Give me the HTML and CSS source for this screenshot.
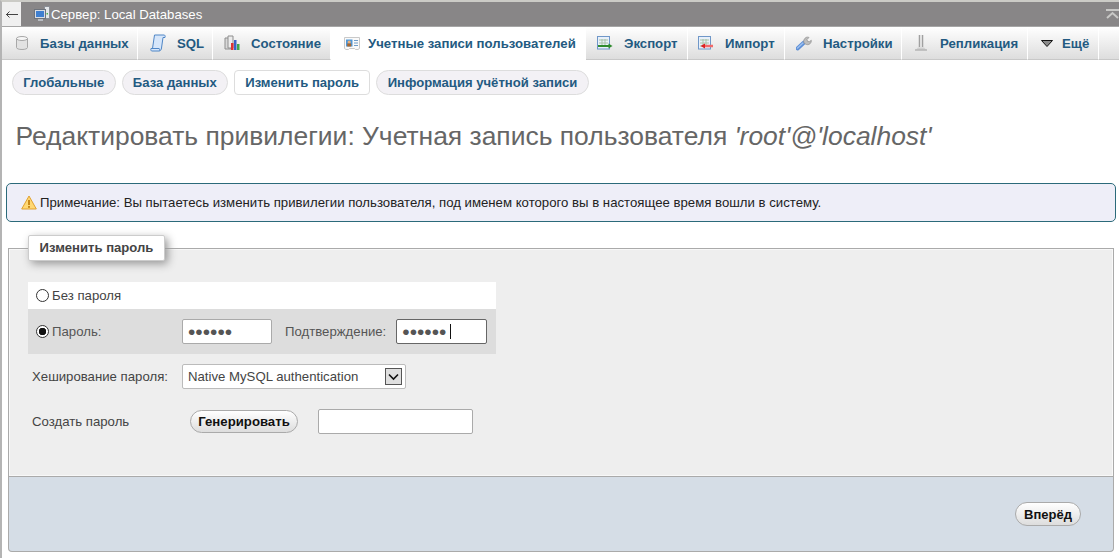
FILE: index.html
```html
<!DOCTYPE html>
<html lang="ru">
<head>
<meta charset="utf-8">
<title>Редактировать привилегии</title>
<link rel="stylesheet" href="styles.css">
</head>
<body>
<header class="serverbar">
  <a class="back" href="#" aria-label="Назад"><svg width="12" height="7" viewBox="0 0 12 7"><path d="M0 3.500h12M3.500.5L.5 3.500l3 3" fill="none" stroke="#444" stroke-width="1"/></svg></a>
  <svg class="server-icon" width="16" height="16" viewBox="0 0 16 16"><rect x="10.500" y="0.500" width="5" height="12" fill="#e4e7ea" stroke="#8b8f96"/><rect x="12.500" y="7" width="1.500" height="1.500" fill="#4caf50"/><rect x="0.500" y="3.500" width="11" height="9" fill="#d9dde3" stroke="#6d737c"/><rect x="2" y="5" width="8" height="6" fill="#3f7fd0"/><rect x="4" y="13" width="5" height="2" fill="#b8bcc2"/></svg>
  <span class="server-name">Сервер: Local Databases</span>
  <svg class="collapse" width="13" height="10" viewBox="0 0 13 10"><path d="M0 1h13M1 9l5.500-5 5.500 5" fill="none" stroke="#c8c8c6" stroke-width="2"/></svg>
</header>

<nav class="tabs">
  <a class="tab tab-db" href="#"><svg class="ico" width="16" height="16" viewBox="0 0 16 16"><path d="M2.500 3.500v9c0 1.200 2.400 2 5.500 2s5.500-.8 5.500-2v-9z" fill="#e2e2e2" stroke="#a8a8a8"/><ellipse cx="8" cy="3.500" rx="5.500" ry="2" fill="#f6f6f6" stroke="#a8a8a8"/></svg>Базы данных</a>
  <a class="tab tab-sql" href="#"><svg class="ico" width="16" height="18" viewBox="0 0 16 18"><path d="M4.500 1H14c1 0 1.500 1 1 2.500h-2L11.500 14c-.2 1.800-1 3-2.500 3H2c-1 0-1.500-1-1-2.500h1.500z" fill="#d6e6fa" stroke="#4f86c6"/><path d="M1 14.500h8c.5 0 .8.800.5 2" fill="none" stroke="#4f86c6"/></svg>SQL</a>
  <a class="tab tab-status" href="#"><svg class="ico" width="17" height="16" viewBox="0 0 17 16"><path d="M1 3h6v11H1z" fill="#d8d8d8" stroke="#8e8e8e"/><path d="M4 1h5v12H4z" fill="#ececec" stroke="#8e8e8e"/><rect x="7" y="8" width="2.500" height="7" fill="#d33"/><rect x="10" y="5" width="2.500" height="10" fill="#3a62c8"/><rect x="13" y="9" width="2.500" height="6" fill="#3fa64a"/></svg>Состояние</a>
  <a class="tab tab-users active" href="#"><svg class="ico" width="16" height="13" viewBox="0 0 16 13"><path d="M.5.500h15v11l-1.500 1h-2.500l-1-1h-5l-1 1H2l-1.500-1z" fill="#fafafa" stroke="#c9c9c9"/><rect x="2" y="2.500" width="6.500" height="7" fill="#4f97d8"/><circle cx="5.200" cy="5" r="1.600" fill="#e9b07c"/><rect x="3.200" y="6.500" width="4" height="3" fill="#a9672f"/><path d="M10 3.500h4M10 6h4M10 8.500h4" stroke="#6f9cc8"/></svg>Учетные записи пользователей</a>
  <a class="tab tab-export" href="#"><svg class="ico" width="16" height="14" viewBox="0 0 16 14"><rect x=".5" y=".5" width="12" height="12.500" fill="#e8f0fa" stroke="#6f97c8"/><path d="M2 4h9M2 7h9M2 10h9M5 3v8M8 3v8" stroke="#a8c3a8"/><path d="M1 10h11" stroke="#2e8b2e" stroke-width="2"/><path d="M11.500 7.500l4 2.500-4 2.500z" fill="#2e8b2e"/></svg>Экспорт</a>
  <a class="tab tab-import" href="#"><svg class="ico" width="16" height="14" viewBox="0 0 16 14"><rect x=".5" y=".5" width="12" height="12.500" fill="#e8f0fa" stroke="#6f97c8"/><path d="M2 4h9M2 7h9M2 10h9M5 3v8M8 3v8" stroke="#a8c3a8"/><path d="M5 10h10" stroke="#f26a6a" stroke-width="2.500"/><path d="M7 7.500L2.500 10 7 12.500z" fill="#d22"/></svg>Импорт</a>
  <a class="tab tab-settings" href="#"><svg class="ico" width="16" height="16" viewBox="0 0 16 16"><path d="M1.500 13.500L8 7.500" stroke="#5e8fd6" stroke-width="4" stroke-linecap="round"/><path d="M1.500 13L7 8" stroke="#9dc0ef" stroke-width="1.500" stroke-linecap="round"/><path d="M8 8c-.8-2 0-4.500 2-5.500 1-.5 2-.5 3 0l-2 2 .5 1.800 1.800.5 2-1.500c.2 2-.8 3.500-2.500 4.200-1.500.5-3 0-4.800-1.500z" fill="#bdbdbd" stroke="#8c8c8c" stroke-width=".7"/></svg>Настройки</a>
  <a class="tab tab-repl" href="#"><svg class="ico" width="12" height="16" viewBox="0 0 12 16"><path d="M4.500 0v12M7.500 0v12" stroke="#a0a0a0" stroke-width="1.500"/><path d="M6 1v11" stroke="#e4e4e4"/><path d="M3 12.500h6l2 2H1z" fill="#cfcfcf"/><path d="M0 15h12" stroke="#9c9c9c"/></svg>Репликация</a>
  <a class="tab tab-more" href="#"><svg class="ico" width="12" height="7" viewBox="0 0 12 7"><path d="M.5.500h11L6 6.500z" fill="#8a8a8a" stroke="#111"/></svg>Ещё</a>
  <span class="tab-rest"></span>
</nav>

<nav class="subtabs">
  <a class="pill" href="#">Глобальные</a>
  <a class="pill" href="#">База данных</a>
  <a class="pill current" href="#">Изменить пароль</a>
  <a class="pill" href="#">Информация учётной записи</a>
</nav>

<h2 class="title">Редактировать привилегии: Учетная запись пользователя <em>'root'@'localhost'</em></h2>

<div class="notice">
  <svg class="warn" width="16" height="15" viewBox="0 0 16 15"><path d="M8 1L15.300 14H.7z" fill="#ffd874" stroke="#e0a030" stroke-linejoin="round"/><path d="M8 5v5" stroke="#c98a1a" stroke-width="2"/><rect x="7" y="11" width="2" height="1.800" fill="#c98a1a"/></svg>
  <span>Примечание: Вы пытаетесь изменить привилегии пользователя, под именем которого вы в настоящее время вошли в систему.</span>
</div>

<form class="pwform">
  <fieldset class="fields">
    <legend class="legend">Изменить пароль</legend>
    <div class="pwtable">
      <label class="row row-none"><input class="radio" type="radio" name="pw"><span>Без пароля</span></label>
      <div class="row row-pass">
        <label class="pass-label"><input class="radio" type="radio" name="pw" checked><span>Пароль:</span></label>
        <input class="text pw1" type="password" value="123456">
        <label class="confirm-label">Подтверждение:</label>
        <span class="caret-wrap"><input class="text pw2" type="password" value="123456"><i class="caret"></i></span>
      </div>
    </div>
    <div class="hash-row">
      <label class="hash-label">Хеширование пароля:</label>
      <span class="select-wrap">
        <select class="select"><option>Native MySQL authentication</option></select>
        <svg class="select-arrow" width="17" height="17" viewBox="0 0 17 17"><rect x=".5" y=".5" width="16" height="16" fill="#dfdfdf" stroke="#555"/><path d="M4 6.500l4.500 4.500L13 6.500" fill="none" stroke="#111" stroke-width="1.600"/></svg>
      </span>
    </div>
    <div class="gen-row">
      <label class="gen-label">Создать пароль</label>
      <button class="btn gen-btn" type="button">Генерировать</button>
      <input class="text gen-input" type="text">
    </div>
  </fieldset>
  <div class="footer"><button class="btn next-btn" type="button">Вперёд</button></div>
</form>
</body>
</html>
```

FILE: styles.css
```css
* { box-sizing: border-box; }
html, body { margin: 0; padding: 0; }
body {
  width: 1119px;
  height: 558px;
  overflow: hidden;
  background: #fff;
  border-left: 2px solid #b4b4b4;
  border-top: 2px solid #cbcbc6;
  font-family: "Liberation Sans", Arial, sans-serif;
  font-size: 13.2px;
  color: #444;
}
a { text-decoration: none; }

.serverbar {
  display: flex;
  align-items: center;
  height: 25px;
  margin-left: -2px;
  background: #888687;
  border-bottom: 1px solid #a6a6a6;
  color: #fff;
}
.back {
  display: flex;
  align-items: center;
  justify-content: center;
  align-self: flex-start;
  width: 19px;
  height: 24px;
  margin-left: 2px;
  margin-right: 13px;
  background: #f0f0f0;
}
.server-icon { flex: none; }
.server-name { margin-left: 1px; }
.collapse { margin-left: auto; }

.tabs {
  display: flex;
  height: 33px;
  background: linear-gradient(#fff, #dcdcdc);
}
.tab {
  display: flex;
  align-items: center;
  flex: none;
  height: 33px;
  font-size: 13.2px;
  font-weight: bold;
  color: #235a81;
  border-right: 1px solid #fff;
  border-bottom: 1px solid #c8c8c8;
  white-space: nowrap;
}
.tab .ico { flex: none; }
.tab.active { background: #fff; border-bottom: 0; }
.tab-db { width: 136px; padding-left: 12px; }
.tab-db .ico { margin-right: 10px; }
.tab-sql { width: 75px; padding-left: 12px; }
.tab-sql .ico { margin-right: 11px; }
.tab-status { width: 118px; padding-left: 11px; }
.tab-status .ico { margin-right: 10px; }
.tab-users { width: 255px; padding-left: 13px; }
.tab-users .ico { margin-right: 8px; }
.tab-export { width: 102px; padding-left: 11px; }
.tab-export .ico { margin-right: 11px; }
.tab-import { width: 97px; padding-left: 10px; }
.tab-import .ico { margin-right: 11px; }
.tab-settings { width: 117px; padding-left: 11px; }
.tab-settings .ico { margin-right: 11px; }
.tab-repl { width: 126px; padding-left: 13px; }
.tab-repl .ico { margin-right: 13px; }
.tab-more { width: 71px; padding-left: 13px; }
.tab-more .ico { margin-right: 9px; }
.tab-rest { flex: 1; border-bottom: 1px solid #c8c8c8; }

.subtabs {
  display: flex;
  gap: 6px;
  padding: 10px 0 0 10px;
}
.pill {
  height: 25px;
  padding: 0 10.250px;
  border: 1px solid #ddd;
  border-radius: 13px;
  background: #f3f1f5;
  color: #235a81;
  font-size: 13.1px;
  font-weight: bold;
  line-height: 23px;
}
.pill.current {
  border-radius: 4px;
  background: #fff;
}

.title {
  margin: 26px 0 0 13.500px;
  font-size: 26.440px;
  line-height: 30px;
  font-weight: normal;
  color: #666;
  white-space: nowrap;
}
.title em { font-style: italic; }

.notice {
  display: flex;
  align-items: center;
  gap: 3px;
  width: 1110px;
  height: 39px;
  margin: 32px 0 0 4px;
  padding: 0 0 0 14px;
  border: 1px solid #2b6a7a;
  border-radius: 5px;
  background: #eeeef8;
  color: #222;
}
.warn { flex: none; }

.pwform { margin: 26px 0 0 6px; width: 1106px; }
.fields {
  position: relative;
  margin: 0;
  padding: 0 0 0 19px;
  height: 229px;
  border: 1px solid #aaa;
  background: #eee;
  box-shadow: inset 0 0 0 1px #f8f8f8;
  min-width: 0;
}
.legend {
  float: left;
  width: 137px;
  height: 26px;
  margin: -14px 0 0 0;
  padding: 0;
  border: 1px solid #ccc;
  border-radius: 2px;
  background: #fff;
  box-shadow: 3px 3px 8px #999;
  color: #444;
  font-size: 13.1px;
  font-weight: bold;
  line-height: 24px;
  text-align: center;
}
.pwtable {
  clear: both;
  width: 468px;
  margin-top: 33px;
}
.row { display: flex; align-items: center; }
.row-none {
  height: 27px;
  padding-left: 8px;
  background: #fff;
  color: #444;
}
.row-pass {
  height: 45px;
  padding-left: 8px;
  background: #ddd;
  color: #555;
}
.radio {
  appearance: none;
  flex: none;
  width: 13px;
  height: 13px;
  margin: 0 3px 0 0;
  border: 1px solid #333;
  border-radius: 50%;
  background: #fff;
}
.radio:checked {
  background: radial-gradient(circle, #111 0 3.500px, #fff 4px);
}
.pass-label { display: flex; align-items: center; width: 146px; }
.text {
  height: 25px;
  padding: 0 5px;
  border: 1px solid #aaa;
  border-radius: 2px;
  background: #fff;
  color: #555;
  font-family: "Liberation Sans", Arial, sans-serif;
  font-size: 21px;
  letter-spacing: 0;
  outline: none;
}
.pw1 { width: 90px; }
.confirm-label { margin: 0 10px 0 13px; }
.caret-wrap { position: relative; display: flex; }
.pw2 { width: 91px; border-color: #666; }
.caret {
  position: absolute;
  left: 54px;
  top: 5px;
  width: 1px;
  height: 15px;
  background: #111;
}
.hash-row {
  display: flex;
  align-items: center;
  margin-top: 10px;
  padding-left: 4px;
  color: #444;
}
.hash-label { width: 150px; }
.select-wrap { position: relative; display: flex; }
.select {
  appearance: none;
  width: 224px;
  height: 25px;
  padding: 0 5px;
  border: 1px solid #bbb;
  border-radius: 2px;
  background: #fff;
  color: #444;
  font-family: "Liberation Sans", Arial, sans-serif;
  font-size: 13.2px;
}
.select-arrow {
  position: absolute;
  right: 4px;
  top: 4px;
  pointer-events: none;
}
.gen-row {
  display: flex;
  align-items: center;
  margin-top: 20px;
  padding-left: 4px;
  color: #444;
}
.gen-label { width: 158px; }
.btn {
  height: 23px;
  padding: 0;
  border: 1px solid #aaa;
  border-radius: 12px;
  background: linear-gradient(#fff, #ddd);
  color: #111;
  font-family: "Liberation Sans", Arial, sans-serif;
  font-size: 13.2px;
  font-weight: bold;
}
.gen-btn { width: 108px; }
.next-btn { width: 66px; height: 24px; font-size: 13px; }
.gen-input { width: 155px; margin-left: 20px; }
.footer {
  display: flex;
  justify-content: flex-end;
  align-items: center;
  height: 75px;
  padding: 0 32px 0 0;
  border: 1px solid #aaa;
  border-top: 0;
  border-radius: 0 0 4px 4px;
  background: #d5dde6;
}
```
